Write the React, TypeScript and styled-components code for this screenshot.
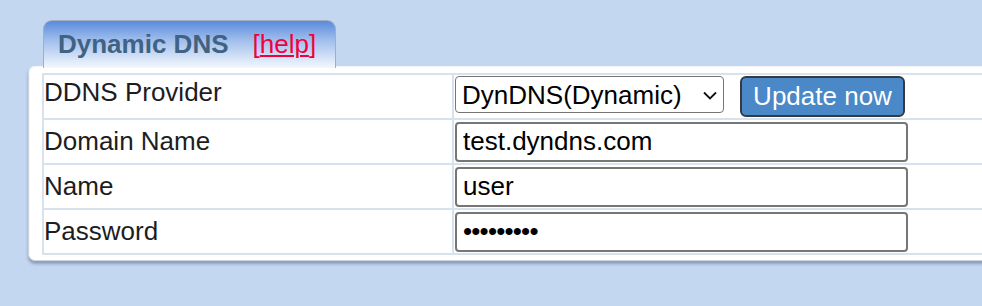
import React from "react";
import styled, { createGlobalStyle } from "styled-components";

const GlobalStyle = createGlobalStyle`
	html, body {
		margin: 0;
		padding: 0;
		background: #c3d7f0;
		overflow: hidden;
	}
	body {
		font-family: "Liberation Sans", Arial, Helvetica, sans-serif;
	}
`;

const Page = styled.div`
	width: 982px;
	height: 306px;
	padding: 20px 0 0 28px;
	box-sizing: border-box;
	display: flex;
	flex-direction: column;
	align-items: flex-start;
`;

const Tab = styled.div`
	position: relative;
	z-index: 1;
	margin-left: 15px;
	margin-bottom: -3px;
	width: 293px;
	height: 48px;
	box-sizing: border-box;
	padding: 8px 0 0 14px;
	border: 1px solid #9fb0c4;
	border-bottom: none;
	border-radius: 9px 9px 0 0;
	background: linear-gradient(to bottom, #5a8bdb 0%, #9fbdec 40%, #f4f8fd 100%);
	display: flex;
	align-items: baseline;
	gap: 24px;
	white-space: nowrap;
`;

const TabTitle = styled.span`
	font-size: 26px;
	font-weight: bold;
	color: #406283;
`;

const HelpLink = styled.a`
	font-size: 26px;
	color: #f2003c;
	text-decoration: none;
	u {
		text-decoration-thickness: 2px;
		text-underline-offset: 2px;
	}
`;

const Panel = styled.div`
	width: 1000px;
	box-sizing: border-box;
	background: #ffffff;
	border: 1px solid #cdd6e0;
	border-radius: 7px;
	padding: 7px 0 5px 13px;
	box-shadow: 0 3px 3px rgba(70, 90, 120, 0.45), inset 1px 1px 0 #f3f6f8;
`;

const FormGrid = styled.div`
	display: grid;
	grid-template-columns: 408px 1fr;
	grid-auto-rows: 43px;
	gap: 2px;
	padding: 2px;
	background: #d8e2ec;
`;

const LabelCell = styled.div<{ $top?: boolean }>`
	background: #ffffff;
	font-size: 26px;
	color: #1d1d1f;
	display: flex;
	align-items: ${(p) => (p.$top ? "flex-start" : "center")};
	padding-top: ${(p) => (p.$top ? "2px" : "0")};
	white-space: nowrap;
`;

const FieldCell = styled.div`
	background: #ffffff;
	display: flex;
	align-items: center;
	padding-left: 1px;
`;

const ProviderRow = styled(FieldCell)`
	align-items: flex-start;
	padding-top: 1px;
	gap: 16px;
`;

const SelectWrap = styled.div`
	position: relative;
	width: 269px;
	height: 37px;
`;

const Select = styled.select`
	appearance: none;
	width: 100%;
	height: 100%;
	box-sizing: border-box;
	border: 1.5px solid #767676;
	border-radius: 4px;
	background: #ffffff;
	font-family: "Liberation Sans", Arial, sans-serif;
	font-size: 26px;
	color: #000;
	padding: 0 0 0 6px;
	outline: none;
`;

const Chevron = styled.svg`
	position: absolute;
	right: 7px;
	top: 15px;
	pointer-events: none;
`;

const Button = styled.button`
	width: 165px;
	height: 41px;
	box-sizing: border-box;
	border: 2px solid #353a42;
	border-radius: 6px;
	background: #4a88c8;
	color: #ffffff;
	font-family: "Liberation Sans", Arial, sans-serif;
	font-size: 26px;
	padding: 0;
	cursor: pointer;
`;

const TextInput = styled.input`
	width: 453px;
	height: 40px;
	box-sizing: border-box;
	border: 2px solid #767676;
	border-radius: 4px;
	background: #ffffff;
	font-family: "Liberation Sans", Arial, sans-serif;
	font-size: 26px;
	color: #000;
	padding: 0 0 0 6px;
	outline: none;
`;

const PasswordInput = styled(TextInput)`
	letter-spacing: -0.8px;
`;

export default function App() {
	return (
		<Page>
			<GlobalStyle />
			<Tab>
				<TabTitle>Dynamic DNS</TabTitle>
				<HelpLink href="#">
					[<u>help</u>]
				</HelpLink>
			</Tab>
			<Panel>
				<FormGrid>
					<LabelCell $top>DDNS Provider</LabelCell>
					<ProviderRow>
						<SelectWrap>
							<Select defaultValue="dyndns">
								<option value="dyndns">DynDNS(Dynamic)</option>
								<option value="static">DynDNS(Static)</option>
								<option value="noip">No-IP</option>
							</Select>
							<Chevron width="14" height="9" viewBox="0 0 14 9">
								<path d="M1 1.5 L7 7.5 L13 1.5" fill="none" stroke="#111" strokeWidth="1.8" />
							</Chevron>
						</SelectWrap>
						<Button type="button">Update now</Button>
					</ProviderRow>

					<LabelCell>Domain Name</LabelCell>
					<FieldCell>
						<TextInput type="text" defaultValue="test.dyndns.com" />
					</FieldCell>

					<LabelCell>Name</LabelCell>
					<FieldCell>
						<TextInput type="text" defaultValue="user" />
					</FieldCell>

					<LabelCell>Password</LabelCell>
					<FieldCell>
						<PasswordInput type="password" defaultValue="123456789" />
					</FieldCell>
				</FormGrid>
			</Panel>
		</Page>
	);
}
